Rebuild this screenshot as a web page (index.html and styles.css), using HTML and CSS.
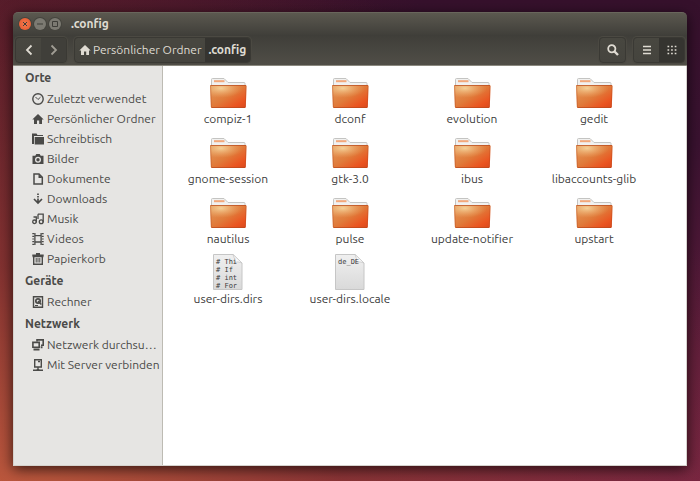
FILE: index.html
```html
<!DOCTYPE html>
<html lang="de">

<head>
    <meta charset="UTF-8">
    <meta name="viewport" content="width=device-width, initial-scale=1.0">
    <title>.config</title>
    <link rel="stylesheet" href="styles.css">
</head>

<body>
    <!-- shared drawings -->
    <svg class="defs" width="0" height="0" aria-hidden="true">
        <defs>
            <linearGradient id="front" x1="0" y1="0" x2="1" y2="1">
                <stop offset="0" stop-color="#e39a5c" />
                <stop offset="0.5" stop-color="#e07a3a" />
                <stop offset="0.8" stop-color="#ea5420" />
                <stop offset="1" stop-color="#d8481c" />
            </linearGradient>
            <radialGradient id="shine" cx="0.3" cy="0.2" r="0.6">
                <stop offset="0" stop-color="#f7d8a0" stop-opacity="0.9" />
                <stop offset="1" stop-color="#f0b070" stop-opacity="0" />
            </radialGradient>
            <linearGradient id="paper" x1="0" y1="0" x2="0" y2="1">
                <stop offset="0" stop-color="#f0f0f0" />
                <stop offset="1" stop-color="#d9d9d9" />
            </linearGradient>
            <symbol id="folder" viewBox="0 0 38 36">
                <path d="M2.500 16V5.500Q2.500 4.500 3.500 4.500H15L19 8.500H35Q36 8.500 36 9.500V16Z" fill="#f1f1f0" stroke="#c4c4c2" />
                <path d="M5 7.200H15.500" stroke="#f2a77a" stroke-width="2" />
                <path d="M1 11.500Q1 11 2 11H36.500Q37.500 11 37.500 12L36.800 33Q36.700 34 35.700 34H3Q2 34 1.900 33Z" fill="url(#front)" />
                <path d="M1 11.500Q1 11 2 11H36.500Q37.500 11 37.500 12L37.200 21Q20 22 1.500 27Z" fill="url(#shine)" />
                <path d="M1.500 11.500H37M2.500 33.500H36" fill="none" stroke="#b8481d" stroke-opacity="0.7" />
                <path d="M1.600 12L2.400 33M37 12L36.300 33" fill="none" stroke="#b8481d" stroke-opacity="0.4" />
            </symbol>
            <symbol id="sheet" viewBox="0 0 30 36">
                <path d="M0.500 0.500H20L29 9V35.500H0.500Z" fill="url(#paper)" stroke="#c6c6c6" />
                <path d="M20 0.500Q22.500 5 21 8.500Q25 7 29 9Z" fill="#fafafa" stroke="#c6c6c6" stroke-width="0.700" />
            </symbol>
            <symbol id="home" viewBox="0 0 12 12">
                <path d="M6 1L0.300 6.500H2V11H5V7.500H7.200V11H10V6.500H11.700Z" fill="currentColor" />
            </symbol>
        </defs>
    </svg>

    <main class="window">
        <header class="titlebar">
            <button class="wm close" aria-label="Schließen"><svg viewBox="0 0 12 12"><path d="M4 4L8 8M8 4L4 8" /></svg></button>
            <button class="wm" aria-label="Minimieren"><svg viewBox="0 0 12 12"><path d="M3 6H9" /></svg></button>
            <button class="wm" aria-label="Maximieren"><svg viewBox="0 0 12 12"><path d="M3.500 3.500H8.500V8.500H3.500Z" /></svg></button>
            <h1>.config</h1>
        </header>

        <nav class="toolbar">
            <div class="group">
                <button class="tool" aria-label="Zurück"><svg width="12" height="12" viewBox="0 0 12 12"><path d="M8.500 1.500L4 6L8.500 10.500" fill="none" stroke="currentColor" stroke-width="1.800" /></svg></button>
                <button class="tool off" aria-label="Vor"><svg width="12" height="12" viewBox="0 0 12 12"><path d="M3.500 1.500L8 6L3.500 10.500" fill="none" stroke="currentColor" stroke-width="1.800" /></svg></button>
            </div>
            <div class="group path">
                <button class="crumb"><svg width="12" height="12"><use href="#home" /></svg>Persönlicher Ordner</button>
                <button class="crumb active">.config</button>
            </div>
            <div class="group search">
                <button class="tool" aria-label="Suchen"><svg width="12" height="12" viewBox="0 0 12 12"><circle cx="4.800" cy="4.800" r="3.600" fill="none" stroke="currentColor" stroke-width="1.800" /><path d="M7.500 7.500L11 11" stroke="currentColor" stroke-width="2.400" /></svg></button>
            </div>
            <div class="group">
                <button class="tool" aria-label="Liste"><svg width="10" height="10" viewBox="0 0 10 10"><path d="M1 1.500H9M1 5H9M1 8.500H9" stroke="currentColor" stroke-width="1.700" /></svg></button>
                <button class="tool active" aria-label="Symbole"><svg width="10" height="10" viewBox="0 0 10 10"><path d="M0.500 1.500H9.500M0.500 5H9.500M0.500 8.500H9.500" stroke="currentColor" stroke-width="1.700" stroke-dasharray="1.700 1.900" /></svg></button>
            </div>
        </nav>

        <div class="content">
            <aside class="sidebar">
                <section>
                    <h2>Orte</h2>
                    <ul>
                        <li><a href="#"><svg viewBox="0 0 12 12"><circle cx="6" cy="6" r="5.200" fill="none" stroke="currentColor" stroke-width="1.400" /><path d="M3.500 4L6 6.500L8.500 4.200" fill="none" stroke="currentColor" /></svg>Zuletzt verwendet</a></li>
                        <li><a href="#"><svg><use href="#home" /></svg>Persönlicher Ordner</a></li>
                        <li><a href="#"><svg viewBox="0 0 12 12"><path d="M0 0.500H4.500L5.500 2H11V3H2V11H0Z" fill="currentColor" /><path d="M2.700 4H12V11.500H2.700Z" fill="currentColor" /></svg>Schreibtisch</a></li>
                        <li><a href="#"><svg viewBox="0 0 12 12"><path fill-rule="evenodd" d="M0.500 2.700H3.300L4.300 1H7.700L8.700 2.700H11.500V11H0.500ZM6 3.700A3 3 0 1 0 6 9.700A3 3 0 1 0 6 3.700Z" fill="currentColor" /><circle cx="6" cy="6.700" r="1.700" fill="currentColor" /></svg>Bilder</a></li>
                        <li><a href="#"><svg viewBox="0 0 12 12"><path d="M2 1H7L10.300 4.300V11H2Z" fill="none" stroke="currentColor" stroke-width="1.500" /><path d="M6.500 1V5H10.300Z" fill="currentColor" /></svg>Dokumente</a></li>
                        <li><a href="#"><svg viewBox="0 0 12 12"><path d="M6 0.500V2M6 3V4.500M6 5.500V9.500M2 6L6 10L10 6" fill="none" stroke="currentColor" stroke-width="1.700" /></svg>Downloads</a></li>
                        <li><a href="#"><svg viewBox="0 0 12 12"><path d="M4.300 9.500V4H1.500M5.900 1.200H11.200V9.500M6 1.200V6" fill="none" stroke="currentColor" stroke-width="1.300" /><circle cx="2.500" cy="8.800" r="1.800" fill="none" stroke="currentColor" stroke-width="1.300" /><circle cx="9.200" cy="8.800" r="1.900" fill="none" stroke="currentColor" stroke-width="1.300" /></svg>Musik</a></li>
                        <li><a href="#"><svg viewBox="0 0 12 12"><path d="M2.900 0V12M9.100 0V12M2.900 2.700H9.100M2.900 9H9.100" fill="none" stroke="currentColor" stroke-width="1.300" /><path d="M1.300 0V12M10.700 0V12" stroke="currentColor" stroke-width="2" stroke-dasharray="1.200 1.500" /></svg>Videos</a></li>
                        <li><a href="#"><svg viewBox="0 0 12 12"><path d="M0.300 2.200H11.700M4 0.800H8M1.700 3.500V11.200H10.300V3.500M0.500 3.500H11.500" fill="none" stroke="currentColor" stroke-width="1.400" /><path d="M4.200 5V9.500M6 5V9.500M7.800 5V9.500" stroke="currentColor" /></svg>Papierkorb</a></li>
                    </ul>
                </section>
                <section>
                    <h2>Geräte</h2>
                    <ul>
                        <li><a href="#"><svg viewBox="0 0 12 12"><path d="M1.500 0.800H10.500V11.200H1.500Z" fill="none" stroke="currentColor" stroke-width="1.400" /><circle cx="6" cy="5" r="2.200" fill="none" stroke="currentColor" stroke-width="1.700" /><path d="M6 5L9.300 8.500" stroke="currentColor" stroke-width="1.500" /><path d="M3 9.500H6" stroke="currentColor" /></svg>Rechner</a></li>
                    </ul>
                </section>
                <section>
                    <h2>Netzwerk</h2>
                    <ul>
                        <li><a href="#"><svg viewBox="0 0 12 12"><path d="M5 2.500V0.900H11.200V6.200H9" fill="none" stroke="currentColor" stroke-width="1.600" /><path d="M0.900 3.400H7.200V8.200H0.900Z" fill="none" stroke="currentColor" stroke-width="1.600" /><path d="M1.500 10.500H7.500M8.700 8.200H10.500" stroke="currentColor" stroke-width="2" /></svg>Netzwerk durchsu…</a></li>
                        <li><a href="#"><svg viewBox="0 0 12 12"><path d="M2.700 0.700H9.300V8H2.700ZM6 8V11M1 11.200H11" fill="none" stroke="currentColor" stroke-width="1.400" /><path d="M6 2.500H8M4.700 10.700H7.300" stroke="currentColor" stroke-width="1.500" /></svg>Mit Server verbinden</a></li>
                    </ul>
                </section>
            </aside>

            <ul class="files">
                <li><svg class="folder"><use href="#folder" /></svg><span>compiz-1</span></li>
                <li><svg class="folder"><use href="#folder" /></svg><span>dconf</span></li>
                <li><svg class="folder"><use href="#folder" /></svg><span>evolution</span></li>
                <li><svg class="folder"><use href="#folder" /></svg><span>gedit</span></li>
                <li><svg class="folder"><use href="#folder" /></svg><span>gnome-session</span></li>
                <li><svg class="folder"><use href="#folder" /></svg><span>gtk-3.0</span></li>
                <li><svg class="folder"><use href="#folder" /></svg><span>ibus</span></li>
                <li><svg class="folder"><use href="#folder" /></svg><span>libaccounts-glib</span></li>
                <li><svg class="folder"><use href="#folder" /></svg><span>nautilus</span></li>
                <li><svg class="folder"><use href="#folder" /></svg><span>pulse</span></li>
                <li><svg class="folder"><use href="#folder" /></svg><span>update-notifier</span></li>
                <li><svg class="folder"><use href="#folder" /></svg><span>upstart</span></li>
                <li>
                    <div class="doc"><svg><use href="#sheet" /></svg><pre># Thi
# If
# int
# For</pre></div>
                    <span>user-dirs.dirs</span>
                </li>
                <li>
                    <div class="doc"><svg><use href="#sheet" /></svg><pre>de_DE</pre></div>
                    <span>user-dirs.locale</span>
                </li>
            </ul>
        </div>
    </main>
</body>

</html>
```

FILE: styles.css
```css
* {
    margin: 0;
    padding: 0;
    box-sizing: border-box;
}

body {
    display: flex;
    min-height: 100vh;
    padding: 12px 13px 15px;
    font: 12px/18px Ubuntu, "Noto Sans", sans-serif;
    color: #3c3c3c;
    background:
        radial-gradient(ellipse at 0% 110%, #c65f3f 0%, rgba(150, 60, 50, 0.7) 35%, rgba(110, 35, 55, 0) 80%),
        linear-gradient(to right, rgba(90, 26, 38, 0.6), rgba(60, 18, 44, 0) 60%),
        linear-gradient(to bottom, #36112c, #3a1230 30%, #742343);
}

ul {
    list-style: none;
}

button {
    border: 0;
    background: none;
    color: inherit;
    font: inherit;
}

.defs {
    position: absolute;
}

.window {
    flex: 1;
    display: flex;
    flex-direction: column;
    border-radius: 5px 5px 0 0;
    box-shadow: 0 3px 14px rgba(0, 0, 0, 0.7);
}

.titlebar {
    display: flex;
    align-items: center;
    gap: 3px;
    height: 23px;
    padding-left: 6px;
    border-radius: 5px 5px 0 0;
    background: linear-gradient(#5b584f, #403f3a);
    border-top: 1px solid #69665c;
}

.titlebar h1 {
    margin-left: 7px;
    font-size: 12px;
    color: #dfdbd2;
}

.wm {
    width: 12px;
    height: 12px;
    border-radius: 50%;
    background: #7c7a72;
    box-shadow: 0 0 0 1px #45443e;
}

.wm svg {
    display: block;
    fill: none;
    stroke: #3f3e39;
}

.close {
    background: radial-gradient(#f47a50, #e4552a);
}

.toolbar {
    display: flex;
    align-items: center;
    gap: 7px;
    height: 31px;
    padding: 0 2px;
    background: linear-gradient(#3f3e39, #504e47);
    border-bottom: 1px solid #8b897f;
    color: #dfdbd2;
}

.group {
    display: flex;
    height: 26px;
    border: 1px solid #3a3934;
    border-radius: 4px;
    background: linear-gradient(#484740, #45443e);
    box-shadow: 0 0 0 1px #4b4942;
    overflow: hidden;
}

.search {
    margin-left: auto;
}

.tool {
    display: flex;
    align-items: center;
    justify-content: center;
    width: 25px;
}

.off {
    background: #403f3a;
    color: #a09d94;
}

.crumb {
    display: flex;
    align-items: center;
    gap: 2px;
    padding: 0 3px 0 4px;
}

.active {
    background: #353430;
}

.crumb.active {
    padding: 0 4px;
    font-weight: bold;
}

.content {
    flex: 1;
    display: flex;
    background: #fff;
    border: 1px solid #d5d2cd;
    border-top: 0;
}

.sidebar {
    width: 149px;
    padding-top: 1px;
    background: #e6e5e3;
    border-right: 1px solid #bdbbb3;
    color: #4a4a48;
}

.sidebar section {
    margin-bottom: 1px;
}

.sidebar h2 {
    padding-left: 11px;
    font-size: 12px;
    line-height: 22px;
}

.sidebar a {
    display: flex;
    align-items: center;
    gap: 3px;
    height: 20px;
    padding-left: 18px;
    color: inherit;
    text-decoration: none;
    white-space: nowrap;
}

.sidebar svg {
    flex: none;
    width: 12px;
    height: 12px;
}

.files {
    flex: 1;
    display: grid;
    grid-template-columns: repeat(auto-fill, 122px);
    align-content: start;
    row-gap: 6px;
    padding: 8px 4px;
}

.files li {
    display: flex;
    flex-direction: column;
    align-items: center;
}

.folder {
    width: 38px;
    height: 36px;
}

.doc {
    position: relative;
    width: 30px;
    height: 36px;
    overflow: hidden;
}

.doc svg {
    width: 30px;
    height: 36px;
}

.doc pre {
    position: absolute;
    top: 4px;
    left: 3px;
    font: 7px/8px "DejaVu Sans Mono", monospace;
}
```
